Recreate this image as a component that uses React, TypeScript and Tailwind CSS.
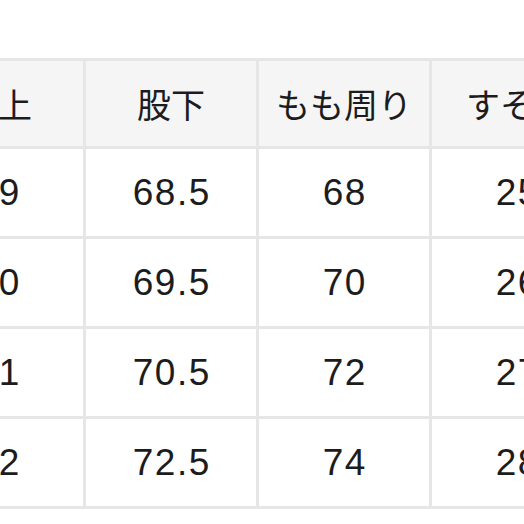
import React from "react";

const headers = ["股上", "股下", "もも周り", "すそ幅"];
const rows = [
  ["29", "68.5", "68", "25"],
  ["30", "69.5", "70", "26"],
  ["31", "70.5", "72", "27"],
  ["32", "72.5", "74", "28"],
];

export default function App() {
  return (
    <div className="w-[524px] h-[524px] bg-white overflow-hidden">
      <div className="pt-[58px]">
        <div className="ml-[-90px] w-fit grid grid-cols-[170px_170px_170px_170px] gap-[3px] p-[3px] bg-[#e6e6e6]">
          {headers.map((h) => (
            <div
              key={h}
              className="h-[85px] bg-[#f5f5f5] flex items-center justify-center text-[34px] text-[#1c1c1c] whitespace-nowrap"
              style={{ fontFamily: '"Noto Sans CJK JP", sans-serif' }}
            >
              {h}
            </div>
          ))}
          {rows.map((r, i) =>
            r.map((c, j) => (
              <div
                key={`${i}-${j}`}
                className="h-[87px] bg-white flex items-center justify-center text-[37px] tracking-[1.5px] text-[#1c1c1c] pl-[1.5px]"
                style={{ fontFamily: '"Liberation Sans", Arial, sans-serif' }}
              >
                {c}
              </div>
            ))
          )}
        </div>
      </div>
    </div>
  );
}
